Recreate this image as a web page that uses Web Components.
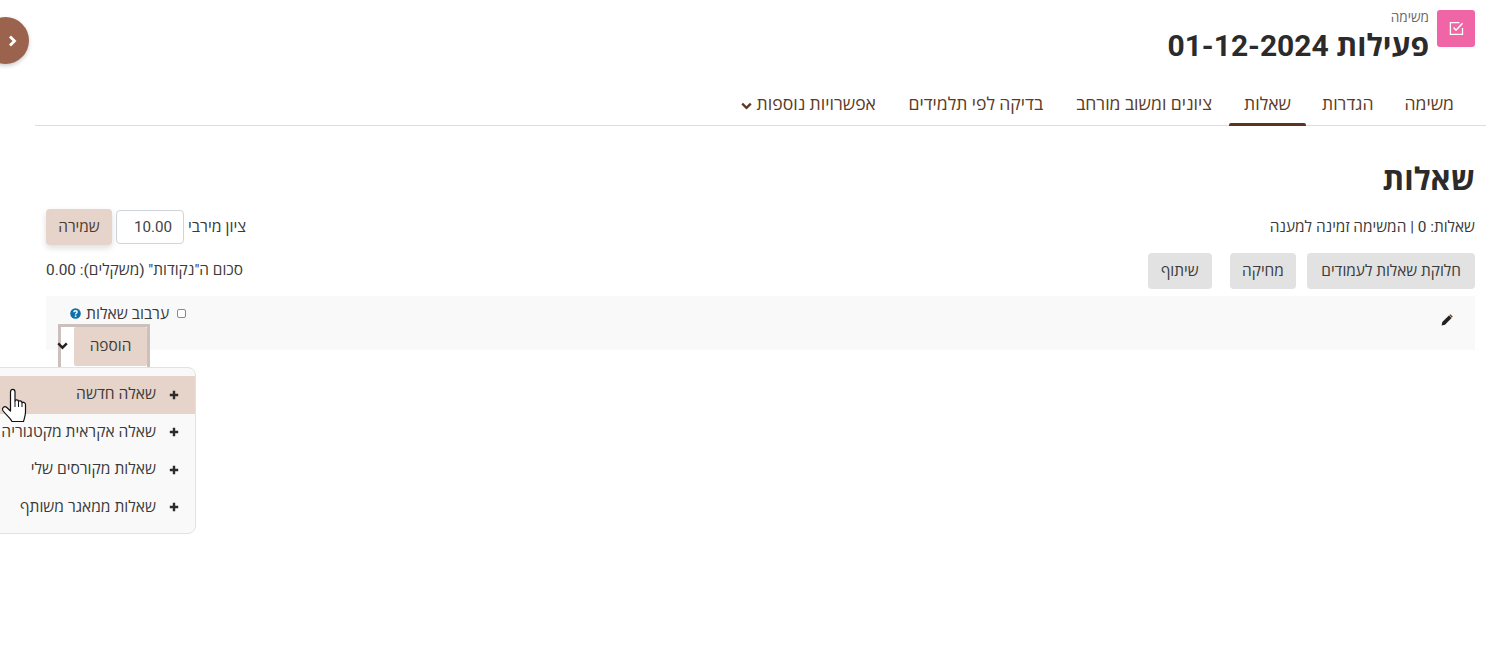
<!DOCTYPE html>
<html lang="he" dir="rtl">
<head>
<meta charset="utf-8">
<title>שאלות</title>
<style>
  html, body { margin: 0; height: 100%; overflow: hidden; background: #fff; }
  body { font: 15.4px/1.5 Roboto, "Open Sans", "Noto Sans", sans-serif; color: #3a3a3a; }
</style>
</head>
<body>
<drawer-toggle></drawer-toggle>
<quiz-page>
  <activity-header slot="header" label="משימה" title-text="פעילות 01-12-2024"></activity-header>
  <tab-nav slot="tabs"></tab-nav>
  <h2-title slot="main">שאלות</h2-title>
  <info-row slot="main"></info-row>
  <action-row slot="main"></action-row>
  <edit-panel slot="main"></edit-panel>
</quiz-page>
<hand-cursor></hand-cursor>

<script>
class DrawerToggle extends HTMLElement {
  constructor() {
    super();
    this.attachShadow({ mode: 'open' }).innerHTML = `
      <style>
        :host { position:fixed; left:-18px; top:17px; width:47px; height:47px; border-radius:50%;
          background:#9b634e; box-shadow:0 2px 4px #00000033; display:flex; align-items:center; justify-content:flex-start; }
        svg { margin-right:12px; display:block; }
      </style>
      <svg width="9" height="12" viewBox="0 0 9 12"><path d="M2 1.5 6.5 6 2 10.5" fill="none" stroke="#fff" stroke-width="2.8"/></svg>`;
  }
}
customElements.define('drawer-toggle', DrawerToggle);

class QuizPage extends HTMLElement {
  constructor() {
    super();
    this.attachShadow({ mode: 'open' }).innerHTML = `
      <style>
        :host { display:block; padding:10px 15px 0 35px; }
        .main { padding:0 11px; display:block; }
      </style>
      <slot name="header"></slot>
      <slot name="tabs"></slot>
      <div class="main"><slot name="main"></slot></div>`;
  }
}
customElements.define('quiz-page', QuizPage);

class ActivityHeader extends HTMLElement {
  constructor() {
    super();
    const label = this.getAttribute('label') || '';
    const titleText = this.getAttribute('title-text') || '';
    this.attachShadow({ mode: 'open' }).innerHTML = `
      <style>
        :host { display:flex; gap:8px; padding-right:11px; height:73px; }
        .icon { width:38px; height:37px; border-radius:3px; background:#ef65a5; display:flex; align-items:center; justify-content:center; flex:none; }
        .label { font-size:13.6px; line-height:14px; color:#6a6a6a; }
        .title { font-size:30px; line-height:36px; font-weight:700; color:#2b2b2b; margin-top:4px; }
      </style>
      <div class="icon">
        <svg width="15" height="15" viewBox="0 0 15 15" fill="none" stroke="#fff" stroke-width="1.3">
          <path d="M13.5 7v6.4H1.4V1.6h9"/><path d="M4.6 6.6 7 9.2 13.6 2.2" stroke-width="1.5"/>
        </svg>
      </div>
      <div>
        <div class="label">${label}</div>
        <div class="title">${titleText}</div>
      </div>`;
  }
}
customElements.define('activity-header', ActivityHeader);

class TabNav extends HTMLElement {
  constructor() {
    super();
    const tabs = ['משימה', 'הגדרות', 'שאלות', 'ציונים ומשוב מורחב', 'בדיקה לפי תלמידים'];
    this.attachShadow({ mode: 'open' }).innerHTML = `
      <style>
        :host { display:flex; border-bottom:1px solid #dedede; height:43px; box-sizing:border-box; padding-right:16.5px; color:#5c3a26; font-size:17.6px; }
        .tab { padding:0 16px; line-height:42px; position:relative; white-space:nowrap; }
        .tab.tight { padding:0 15.5px; }
        .tab.wide { padding:0 16.5px; }
        .tab.active::after { content:''; position:absolute; left:0; right:0; bottom:-1px; height:3px; background:#5c3420; border-radius:2px 2px 0 0; }
        svg { margin-right:5px; }
      </style>
      ${tabs.map((t, i) => `<div class="tab${i < 3 ? ' tight' : ' wide'}${i === 2 ? ' active' : ''}">${t}</div>`).join('')}
      <div class="tab">אפשרויות נוספות<svg width="11" height="8" viewBox="0 0 11 8"><path d="M1.2 1.6 5.5 5.9 9.8 1.6" fill="none" stroke="#5c3a26" stroke-width="2.3"/></svg></div>`;
  }
}
customElements.define('tab-nav', TabNav);

class H2Title extends HTMLElement {
  constructor() {
    super();
    this.attachShadow({ mode: 'open' }).innerHTML = `
      <style>
        :host { display:block; font-size:31px; line-height:36px; font-weight:700; color:#2b2b2b; padding-top:36px; height:83px; box-sizing:border-box; }
      </style>
      <slot></slot>`;
  }
}
customElements.define('h2-title', H2Title);

class InfoRow extends HTMLElement {
  constructor() {
    super();
    this.attachShadow({ mode: 'open' }).innerHTML = `
      <style>
        :host { display:flex; justify-content:space-between; height:36px; }
        .status { line-height:37px; }
        .grade { display:flex; gap:4px; align-items:flex-start; }
        .lbl { line-height:35px; font-size:15.8px; }
        .input { width:68px; height:34px; margin-top:1px; box-sizing:border-box; border:1px solid #ced4da; border-radius:4px;
          text-align:left; direction:ltr; padding-left:17px; line-height:33px; color:#444; font-size:15.2px; }
        .save { width:66px; height:36px; border-radius:4px; background:#e6d3c9; color:#4a3a32; text-align:center; line-height:36px; box-shadow:0 3px 6px #00000022; }
      </style>
      <div class="status">שאלות: 0 | המשימה זמינה למענה</div>
      <div class="grade">
        <span class="lbl">ציון מירבי</span>
        <div class="input">10.00</div>
        <div class="save">שמירה</div>
      </div>`;
  }
}
customElements.define('info-row', InfoRow);

class ActionRow extends HTMLElement {
  constructor() {
    super();
    this.attachShadow({ mode: 'open' }).innerHTML = `
      <style>
        :host { display:flex; justify-content:space-between; height:36px; margin-top:8px; }
        .btns { display:flex; }
        .btn { height:36px; line-height:36px; padding:0 14px; border-radius:4px; background:#e2e2e2; color:#3a3a3a; white-space:nowrap; }
        .btn + .btn { margin-right:11px; padding:0 12.5px; }
        .btn + .btn + .btn { margin-right:18px; padding:0 13px; }
        .sum { line-height:34px; }
      </style>
      <div class="btns">
        <div class="btn">חלוקת שאלות לעמודים</div>
        <div class="btn">מחיקה</div>
        <div class="btn">שיתוף</div>
      </div>
      <div class="sum">סכום ה"נקודות" (משקלים): 0.00</div>`;
  }
}
customElements.define('action-row', ActionRow);

class EditPanel extends HTMLElement {
  constructor() {
    super();
    this.attachShadow({ mode: 'open' }).innerHTML = `
      <style>
        :host { display:flex; justify-content:space-between; height:54px; margin-top:7px; background:#f9f9f9; padding:0 22px 0 12px; }
        .pencil { margin-top:18px; display:block; }
        .side { display:flex; flex-direction:column; align-items:flex-end; padding-top:7px; }
        .shuffle { display:flex; align-items:center; gap:8px; height:21px; padding-left:12px; font-size:15.7px; flex:none; }
        .cb { width:7px; height:7px; border:1px solid #8a8a8a; border-radius:2px; background:#fff; flex:none; }
        .help { display:block; margin-right:-3px; }
        add-menu { flex:none; }
      </style>
      <svg class="pencil" width="12" height="12" viewBox="0 0 12 12">
        <path d="M0.6 11.4 1.3 8 7.9 1.4 10.6 4.1 4 10.7Z" fill="#222"/>
        <path d="M8.7.7 9.4.3 11.7 2.6 11.3 3.3 10.6 3.4 8.6 1.4Z" fill="#7a3b1e"/>
      </svg>
      <div class="side">
        <div class="shuffle">
          <span class="cb"></span>
          <span>ערבוב שאלות</span>
          <svg class="help" width="11" height="11" viewBox="0 0 11 11">
            <circle cx="5.5" cy="5.5" r="5.3" fill="#0b71a8"/>
            <path d="M3.8 4.2C3.9 3.2 4.6 2.7 5.5 2.7 6.5 2.7 7.2 3.3 7.2 4.1 7.2 5.2 5.6 5.2 5.6 6.4" fill="none" stroke="#fff" stroke-width="1.4"/>
            <rect x="4.8" y="7.4" width="1.6" height="1.5" fill="#fff"/>
          </svg>
        </div>
        <add-menu></add-menu>
      </div>`;
  }
}
customElements.define('edit-panel', EditPanel);

class AddMenu extends HTMLElement {
  constructor() {
    super();
    const items = ['שאלה חדשה', 'שאלה אקראית מקטגוריה', 'שאלות מקורסים שלי', 'שאלות ממאגר משותף'];
    const plus = `<svg width="10" height="10" viewBox="0 0 10 10"><path d="M5 .8V9.2M.8 5H9.2" stroke="#2b2b2b" stroke-width="2.4" fill="none"/></svg>`;
    this.attachShadow({ mode: 'open' }).innerHTML = `
      <style>
        :host { display:block; position:relative; width:92px; height:44px; box-sizing:border-box; border:3px solid #cbc0bb; border-bottom:0; background:#fff; }
        .add { position:absolute; right:0; top:0; width:73px; height:39px; line-height:38px; text-align:center; background:#e6d3c9; color:#3a3a3a; border-radius:2px; }
        .chev { position:absolute; left:-4px; top:15px; display:block; }
        .menu { position:absolute; top:40px; right:-49px; width:240px; height:167px; box-sizing:border-box; padding:8px 0; background:#f9f9f9; border:1px solid #e2e2e2; border-radius:8px; color:#3a3a3a; font-size:15.6px; }
        .item { height:37.5px; line-height:37.5px; display:flex; align-items:center; gap:13px; padding-right:16px; white-space:nowrap; }
        .item.hover { background:#e6d3c9; }
      </style>
      <div class="add">הוספה</div>
      <svg class="chev" width="11" height="8" viewBox="0 0 11 8"><path d="M1.2 1.4 5.5 5.7 9.8 1.4" fill="none" stroke="#222" stroke-width="2.4"/></svg>
      <div class="menu">
        ${items.map((t, i) => `<div class="item${i === 0 ? ' hover' : ''}">${plus}<span>${t}</span></div>`).join('')}
      </div>`;
  }
}
customElements.define('add-menu', AddMenu);

class HandCursor extends HTMLElement {
  constructor() {
    super();
    this.attachShadow({ mode: 'open' }).innerHTML = `
      <style>
        :host { position:fixed; left:0; top:384px; width:28px; height:40px; display:block; }
      </style>
      <svg width="28" height="40" viewBox="0 0 28 40">
        <path d="M10.5 8C10.5 4.4 15 4.4 15 8V17C15 15.5 18.5 15.5 18.5 17.5 18.5 16.5 22 16.5 22 18.8 22 18 25.5 18 25.5 20.5V28C25.5 31.5 24.5 34 23.5 37.5H12C10 33.5 5.5 30.5 2.8 26.5 1.5 24 4.5 21.5 6.8 23.5L10.5 27Z" fill="#fff" stroke="#111" stroke-width="1.2" stroke-linejoin="round"/>
        <path d="M15 17V23M18.5 17.5V23M22 18.8V23" stroke="#111" stroke-width="1" fill="none"/>
      </svg>`;
  }
}
customElements.define('hand-cursor', HandCursor);
</script>
</body>
</html>
